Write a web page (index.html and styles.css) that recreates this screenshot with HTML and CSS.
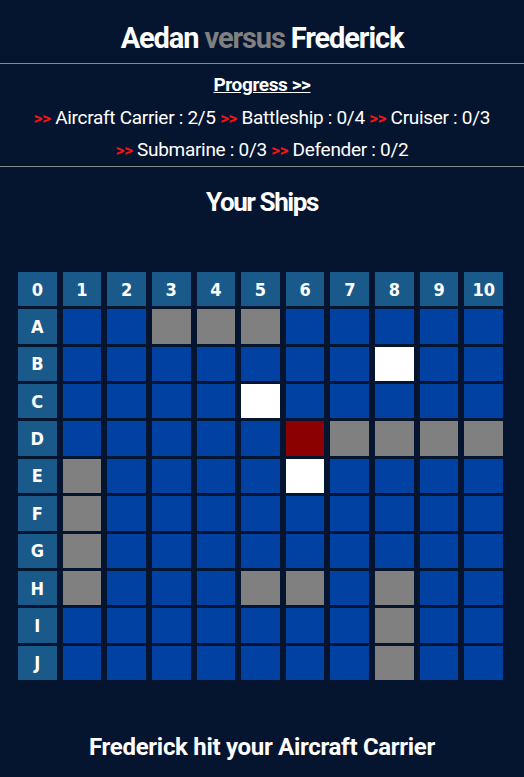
FILE: index.html
```html
<!DOCTYPE html>
<html lang="en">
<head>
<meta charset="utf-8">
<title>Aedan versus Frederick</title>
<link rel="stylesheet" href="styles.css">
</head>
<body>
<header class="top">
  <h1 class="title">Aedan <span class="versus">versus</span> Frederick</h1>
</header>
<section class="progress">
  <a class="progress-link" href="#">Progress &gt;&gt;</a>
  <p class="ships-line"><span class="item"><span class="arrows">&gt;&gt;</span> Aircraft Carrier : 2/5</span> <span class="item"><span class="arrows">&gt;&gt;</span> Battleship : 0/4</span> <span class="item"><span class="arrows">&gt;&gt;</span> Cruiser : 0/3</span></p>
  <p class="ships-line"><span class="item"><span class="arrows">&gt;&gt;</span> Submarine : 0/3</span> <span class="item"><span class="arrows">&gt;&gt;</span> Defender : 0/2</span></p>
</section>
<h2 class="section-title">Your Ships</h2>
<div class="board">
  <div class="lbl">0</div><div class="lbl">1</div><div class="lbl">2</div><div class="lbl">3</div><div class="lbl">4</div><div class="lbl">5</div><div class="lbl">6</div><div class="lbl">7</div><div class="lbl">8</div><div class="lbl">9</div><div class="lbl">10</div>

  <div class="lbl">A</div><div class="sea"></div><div class="sea"></div><div class="ship"></div><div class="ship"></div><div class="ship"></div><div class="sea"></div><div class="sea"></div><div class="sea"></div><div class="sea"></div><div class="sea"></div>

  <div class="lbl">B</div><div class="sea"></div><div class="sea"></div><div class="sea"></div><div class="sea"></div><div class="sea"></div><div class="sea"></div><div class="sea"></div><div class="miss"></div><div class="sea"></div><div class="sea"></div>

  <div class="lbl">C</div><div class="sea"></div><div class="sea"></div><div class="sea"></div><div class="sea"></div><div class="miss"></div><div class="sea"></div><div class="sea"></div><div class="sea"></div><div class="sea"></div><div class="sea"></div>

  <div class="lbl">D</div><div class="sea"></div><div class="sea"></div><div class="sea"></div><div class="sea"></div><div class="sea"></div><div class="hit"></div><div class="ship"></div><div class="ship"></div><div class="ship"></div><div class="ship"></div>

  <div class="lbl">E</div><div class="ship"></div><div class="sea"></div><div class="sea"></div><div class="sea"></div><div class="sea"></div><div class="miss"></div><div class="sea"></div><div class="sea"></div><div class="sea"></div><div class="sea"></div>

  <div class="lbl">F</div><div class="ship"></div><div class="sea"></div><div class="sea"></div><div class="sea"></div><div class="sea"></div><div class="sea"></div><div class="sea"></div><div class="sea"></div><div class="sea"></div><div class="sea"></div>

  <div class="lbl">G</div><div class="ship"></div><div class="sea"></div><div class="sea"></div><div class="sea"></div><div class="sea"></div><div class="sea"></div><div class="sea"></div><div class="sea"></div><div class="sea"></div><div class="sea"></div>

  <div class="lbl">H</div><div class="ship"></div><div class="sea"></div><div class="sea"></div><div class="sea"></div><div class="ship"></div><div class="ship"></div><div class="sea"></div><div class="ship"></div><div class="sea"></div><div class="sea"></div>

  <div class="lbl">I</div><div class="sea"></div><div class="sea"></div><div class="sea"></div><div class="sea"></div><div class="sea"></div><div class="sea"></div><div class="sea"></div><div class="ship"></div><div class="sea"></div><div class="sea"></div>

  <div class="lbl">J</div><div class="sea"></div><div class="sea"></div><div class="sea"></div><div class="sea"></div><div class="sea"></div><div class="sea"></div><div class="sea"></div><div class="ship"></div><div class="sea"></div><div class="sea"></div>
</div>
<p class="status">Frederick hit your Aircraft Carrier</p>
</body>
</html>
```

FILE: styles.css
```css
html, body {
  margin: 0;
  padding: 0;
  background: #05152f;
  color: #ffffff;
  font-family: Roboto, "Liberation Sans", sans-serif;
}

.top {
  padding-top: 21px;
  padding-bottom: 8px;
  border-bottom: 1px solid #8a8a8a;
}

.title {
  margin: 0;
  text-align: center;
  font-size: 29px;
  line-height: 34px;
  font-weight: 700;
  letter-spacing: -1.1px;
}

.versus {
  color: #808080;
}

.progress {
  padding-top: 7px;
  text-align: center;
  border-bottom: 1px solid #8a8a8a;
}

.progress-link {
  display: block;
  color: #ffffff;
  font-weight: 700;
  font-size: 19px;
  line-height: 28px;
  margin-bottom: 3px;
  letter-spacing: -0.4px;
  text-decoration: underline;
}

.ships-line {
  margin: 0;
  font-size: 19px;
  line-height: 31px;
  letter-spacing: -0.3px;
}

.arrows {
  color: #ff1010;
  font-weight: 700;
  font-size: 17px;
}

.section-title {
  margin: 20px 0 0;
  text-align: center;
  font-size: 26px;
  line-height: 30px;
  font-weight: 700;
  letter-spacing: -1.4px;
}

.board {
  margin: 55px 0 0 18px;
  width: 485px;
  height: 408px;
  display: grid;
  grid-template-columns: repeat(11, 1fr);
  grid-template-rows: repeat(11, 1fr);
  column-gap: 6px;
  row-gap: 3px;
}

.lbl {
  background: #1a5a8a;
  display: flex;
  align-items: center;
  justify-content: center;
  font-family: "DejaVu Sans Condensed", "DejaVu Sans", sans-serif;
  font-weight: 700;
  font-size: 18px;
}

.sea {
  background: #0041a1;
}

.ship {
  background: #808080;
}

.miss {
  background: #ffffff;
}

.hit {
  background: #8b0000;
}

.status {
  margin: 52px 0 0;
  text-align: center;
  font-size: 24px;
  line-height: 30px;
  font-weight: 700;
  letter-spacing: -0.3px;
}
```
